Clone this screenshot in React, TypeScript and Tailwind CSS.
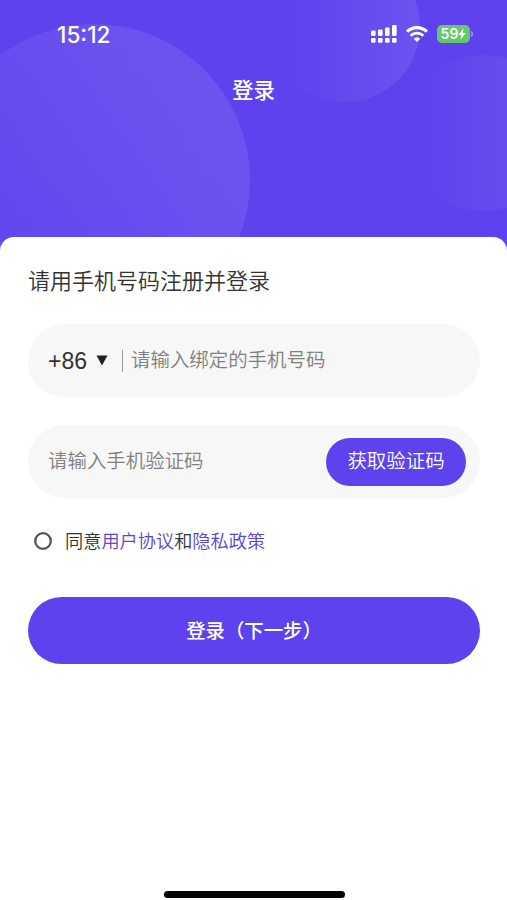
import React, { useState } from 'react'

const SignalIcon = () => (
  <svg width="26" height="18" viewBox="0 0 26 18" fill="white">
    <rect x="0" y="5.5" width="4.6" height="5.5" rx="1.2" />
    <rect x="7" y="4.5" width="4.6" height="6.5" rx="1.2" />
    <rect x="14" y="2.5" width="4.6" height="8.5" rx="1.2" />
    <rect x="21" y="0" width="4.6" height="11" rx="1.2" />
    <rect x="0" y="13" width="4.6" height="4.8" rx="1.2" />
    <rect x="7" y="13" width="4.6" height="4.8" rx="1.2" />
    <rect x="14" y="13" width="4.6" height="4.8" rx="1.2" />
    <rect x="21" y="13" width="4.6" height="4.8" rx="1.2" />
  </svg>
)

const WifiIcon = () => (
  <svg width="22" height="16" viewBox="0 0 22 16" fill="none">
    <path d="M1.1 5.7A14 14 0 0 1 20.9 5.7" stroke="white" strokeWidth="3.1" />
    <path d="M4.7 9.8A8.9 8.9 0 0 1 17.3 9.8" stroke="white" strokeWidth="2.7" />
    <path d="M11 16L7.7 12.7A4.9 4.9 0 0 1 14.3 12.7Z" fill="white" />
  </svg>
)

const BatteryIcon = () => (
  <div className="flex items-center gap-px">
    <div className="flex h-[18px] w-[33px] items-center justify-center rounded-[5px] bg-[#65c967] text-white">
      <span className="font-['Inter',sans-serif] text-[14px] leading-none font-semibold">
        59
      </span>
      <svg width="8" height="12" viewBox="0 0 8 12" fill="white">
        <path d="M5.6 0.3L0.3 6.9H3.4L2.4 11.7L7.8 5H4.7Z" />
      </svg>
    </div>
    <div className="h-[6px] w-[2px] rounded-r-full bg-white/40" />
  </div>
)

const HeaderCircles = () => (
  <svg
    className="absolute inset-0"
    width="507"
    height="256"
    viewBox="0 0 507 256"
  >
    <defs>
      <linearGradient id="big" x1="0.2" y1="0.8" x2="0.85" y2="0.35">
        <stop offset="0" stopColor="white" stopOpacity="0.02" />
        <stop offset="1" stopColor="white" stopOpacity="0.09" />
      </linearGradient>
      <linearGradient id="small" x1="0.1" y1="0" x2="1" y2="0">
        <stop offset="0" stopColor="white" stopOpacity="0" />
        <stop offset="1" stopColor="white" stopOpacity="0.09" />
      </linearGradient>
    </defs>
    <circle cx="94" cy="180" r="156" fill="url(#big)" />
    <circle cx="345" cy="27" r="75" fill="url(#small)" />
    <circle cx="484" cy="133" r="78" fill="url(#small)" />
  </svg>
)

const App = () => {
  const [agreed, setAgreed] = useState(false)

  return (
    <div className="flex h-[900px] w-[507px] flex-col overflow-hidden bg-[#5e42ee] font-['Liberation_Sans','Noto_Sans_CJK_SC',sans-serif]">
      <header className="relative h-[237px] shrink-0">
        <HeaderCircles />
        <div className="relative flex h-[69px] items-center justify-between pr-[34px] pl-[57px] text-white">
          <span className="font-['Inter',sans-serif] text-[22.6px] font-medium">
            15:12
          </span>
          <div className="flex items-center gap-[9px] pb-px">
            <SignalIcon />
            <WifiIcon />
            <BatteryIcon />
          </div>
        </div>
        <h1 className="relative flex h-[45px] items-center justify-center text-[21.5px] font-medium text-white">
          登录
        </h1>
      </header>

      <main className="relative flex flex-1 flex-col rounded-t-[14px] bg-white pt-[29px] pr-[27px] pl-[28px]">
        <h2 className="text-[22px] leading-[32px] font-[350] text-[#333]">
          请用手机号码注册并登录
        </h2>

        <div className="mt-[26px] flex h-[73px] items-center rounded-full bg-[#f7f7f7] pl-5">
          <button className="flex items-center gap-[9px] text-[23px] text-[#333]">
            <span className="pt-[2px]">+86</span>
            <svg width="12" height="11" viewBox="0 0 12 11" fill="#222">
              <path d="M0.5 0.5H11.5L6 10.5Z" />
            </svg>
          </button>
          <div className="mr-[8px] ml-[14px] h-[22px] w-px bg-[#999]" />
          <input
            className="w-[300px] text-[19.45px] font-[350] outline-none placeholder:text-[#808080]"
            placeholder="请输入绑定的手机号码"
          />
        </div>

        <div className="mt-[28px] flex h-[73px] items-center justify-between rounded-full bg-[#f7f7f7] pr-[14px] pl-5">
          <input
            className="w-[240px] text-[19.45px] font-[350] outline-none placeholder:text-[#808080]"
            placeholder="请输入手机验证码"
          />
          <button className="h-[48px] w-[140px] rounded-full bg-[#5e42ee] pt-px text-[19.45px] font-[350] text-white">
            获取验证码
          </button>
        </div>

        <div className="mt-[30px] flex h-[27px] items-center pl-[6px] text-[18.2px] font-[350] text-[#333]">
          <button
            className="mr-[13px] pb-[2px]"
            onClick={() => setAgreed(!agreed)}
          >
            <svg width="18" height="18" viewBox="0 0 18 18" fill="none">
              <circle cx="9" cy="9" r="7.8" stroke="#555" strokeWidth="2.3" />
              {agreed && <circle cx="9" cy="9" r="4" fill="#5e42ee" />}
            </svg>
          </button>
          <p className="pt-[3px]">
            同意<a className="text-[#5a45d0]">用户协议</a>和
            <a className="text-[#5a45d0]">隐私政策</a>
          </p>
        </div>

        <button className="mt-[42px] h-[67px] rounded-full bg-[#5e42ee] pt-[2px] text-[19.4px] font-medium text-white">
          登录（下一步）
        </button>

        <div className="mt-auto mb-[2px] h-[7px] w-[181px] self-center rounded-full bg-black" />
      </main>
    </div>
  )
}

export default App
